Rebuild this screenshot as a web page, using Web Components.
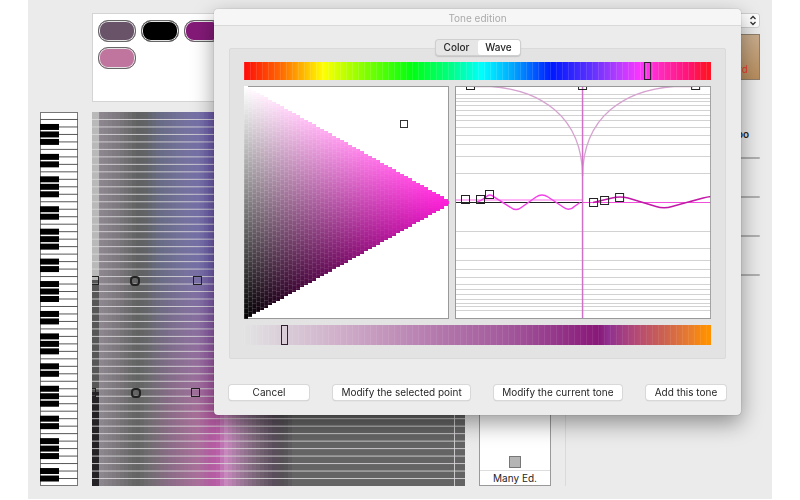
<!DOCTYPE html>
<html lang="en">
<head>
<meta charset="utf-8">
<title>Tone edition</title>
<style>
  body {
    margin: 0;
    background: #fff;
    color: #262626;
    font: 10px/14px Inter, "Liberation Sans", sans-serif;
  }
</style>
</head>
<body>
<score-window>
  <tone-palette slot="palette" colors="#685368,#000,#841a78,#5f5fa8,#a06aa0,#c88abf,#666,#333,#c0759e"></tone-palette>
  <side-top slot="top">rd</side-top>
  <piano-keys slot="piano"></piano-keys>
  <tone-roll slot="roll"></tone-roll>
  <edition-column slot="editions">Many Ed.</edition-column>
  <side-sliders slot="sliders">po</side-sliders>
  <tone-dialog slot="dialog" title-text="Tone edition">
    <view-tabs slot="tabs"></view-tabs>
    <color-slider kind="hue" value="87" label="Hue"></color-slider>
    <editor-panes>
      <color-triangle></color-triangle>
      <wave-chart></wave-chart>
    </editor-panes>
    <color-slider kind="tone" value="8" label="Point"></color-slider>
    <push-button slot="actions" wide>Cancel</push-button>
    <push-button slot="actions">Modify the selected point</push-button>
    <push-button slot="actions">Modify the current tone</push-button>
    <push-button slot="actions" wide>Add this tone</push-button>
  </tone-dialog>
</score-window>

<script>
class BaseElement extends HTMLElement {
  constructor() {
    super();
    this.attachShadow({ mode: 'open' });
  }

  connectedCallback() {
    this.shadowRoot.innerHTML = this.getTemplate();
    this.draw();
  }

  draw() {}
}

// linear interpolation in a list of [position, [r, g, b]]
function colorAt(stops, x) {
  let i = 1;
  while (i < stops.length - 1 && x > stops[i][0]) i++;
  const [x0, a] = stops[i - 1];
  const [x1, b] = stops[i];
  const t = Math.min(1, Math.max(0, (x - x0) / (x1 - x0)));
  return a.map((v, n) => v + (b[n] - v) * t);
}

function rgb(c) {
  return `rgb(${c.map(Math.round).join(',')})`;
}

class ScoreWindow extends BaseElement {
  getTemplate() {
    return `
      <style>
        :host {
          display: block;
          position: relative;
          margin: 0 28px;
          background: #ebebeb;
          overflow: hidden;
        }
        .grid {
          display: grid;
          grid-template-columns: 38px minmax(0, 1fr) 72px 195px;
          grid-template-rows: auto auto;
          column-gap: 14px;
          row-gap: 10px;
          padding: 13px 12px;
        }
        .palette { grid-column: 2; }
        .top { grid-column: 4; }
      </style>
      <main class="grid">
        <div class="palette"><slot name="palette"></slot></div>
        <div class="top"><slot name="top"></slot></div>
        <slot name="piano"></slot>
        <slot name="roll"></slot>
        <slot name="editions"></slot>
        <slot name="sliders"></slot>
      </main>
      <slot name="dialog"></slot>
    `;
  }
}

class TonePalette extends BaseElement {
  getTemplate() {
    const swatches = this.getAttribute('colors').split(',')
      .map((c) => `<button aria-label="Tone ${c}" style="--tone:${c}"></button>`)
      .join('');
    return `
      <style>
        :host {
          box-sizing: border-box;
          display: flex;
          flex-wrap: wrap;
          align-content: flex-start;
          gap: 5px;
          height: 89px;
          padding: 6px 5px;
          background: #fff;
          border: 1px solid #d4d4d4;
        }
        button {
          width: 38px;
          height: 22px;
          padding: 0;
          border: 1px solid #666;
          border-radius: 10px;
          background: var(--tone);
          box-shadow: inset 0 0 0 1px #e4e4e4;
        }
      </style>
      ${swatches}
    `;
  }
}

class SideTop extends BaseElement {
  getTemplate() {
    return `
      <style>
        :host { display: flex; flex-direction: column; gap: 6px; }
        .select { display: grid; align-items: center; }
        .select > * { grid-area: 1 / 1; }
        select {
          appearance: none;
          width: 100%;
          height: 15px;
          border: 1px solid #d0d0d0;
          border-radius: 3px;
          background: #fff;
        }
        svg { justify-self: end; margin-right: 3px; pointer-events: none; }
        .thumb {
          box-sizing: border-box;
          height: 46px;
          padding: 27px 11px 0 0;
          border: 1px solid #8f7f6c;
          background: linear-gradient(170deg, #cdbba6, #c7a987 50%, #b78c5c);
          color: #f0392b;
          text-align: right;
        }
      </style>
      <div class="select">
        <select aria-label="Instrument"></select>
        <svg width="8" height="11" fill="none" stroke="#333" stroke-width="1.3"><path d="M1.5 4 4 1.5 6.5 4M1.5 7 4 9.5 6.5 7"/></svg>
      </div>
      <div class="thumb"><slot></slot></div>
    `;
  }
}

class PianoKeys extends BaseElement {
  getTemplate() {
    let keys = '';
    for (let k = 1; k < 50; k++) {
      const y = k * 7.5;
      keys += `<path d="M0 ${y}H38" stroke="#555"/>`;
      if (k > 1 && [0, 2, 3, 4, 6].includes(k % 7)) {
        keys += `<rect x="0" y="${y - 3}" width="19" height="6"/>`;
      }
    }
    return `
      <style>
        :host { display: block; height: 374px; }
        svg { display: block; width: 100%; height: 100%; }
      </style>
      <svg viewBox="0 0 38 375" preserveAspectRatio="none">
        <rect x=".5" y=".5" width="37" height="374" fill="#fff" stroke="#777"/>${keys}
      </svg>
    `;
  }
}

class ToneRoll extends BaseElement {
  getTemplate() {
    return `
      <style>
        :host { display: block; }
        canvas { display: block; width: 100%; height: 374px; }
      </style>
      <canvas width="374" height="374"></canvas>
    `;
  }

  draw() {
    const canvas = this.shadowRoot.querySelector('canvas');
    canvas.width = this.clientWidth || 374;
    const width = canvas.width;
    const ctx = canvas.getContext('2d');
    const grey = [100, 100, 100];
    const upper = [
      [0, [148, 140, 150]], [26, [122, 118, 124]], [43, [96, 97, 97]], [52, [97, 99, 102]],
      [66, [104, 107, 132]], [85, [114, 112, 152]], [106, [120, 114, 170]],
      [118, [108, 92, 172]], [130, [130, 80, 160]], [190, grey], [375, grey],
    ];
    const lower = [
      [0, [148, 140, 150]], [26, [120, 116, 120]], [43, [98, 99, 98]], [54, [110, 108, 110]],
      [75, [138, 108, 134]], [103, [168, 112, 154]], [118, [178, 90, 160]], [124, [186, 96, 168]],
      [132, [200, 136, 190]], [146, [160, 120, 155]], [163, [120, 100, 118]],
      [180, [90, 78, 92]], [190, [84, 80, 84]], [200, grey], [375, grey],
    ];
    for (let x = 0; x < width; x += 4) {
      for (let r = 0; r < 50; r++) {
        // the blue part turns to pink between rows 20 and 40
        const t = Math.min(1, Math.max(0, (r - 20) / 20));
        ctx.fillStyle = rgb(colorAt([[0, colorAt(upper, x)], [1, colorAt(lower, x)]], t));
        ctx.fillRect(x, r * 7.5, 4, 8);
      }
    }
    ctx.fillStyle = '#b9b9b9';
    ctx.fillRect(0, 0, 7, 168);
    ctx.fillStyle = '#575757';
    ctx.fillRect(0, 168, 7, 112);
    ctx.fillStyle = '#242224';
    ctx.fillRect(0, 280, 7, 94);
    ctx.fillStyle = 'rgba(220,217,220,.85)';
    for (let r = 1; r < 50; r++) ctx.fillRect(0, r * 7.48 - 0.5, width, 1);
    ctx.fillRect(width - 11, 0, 1, 374);

    ctx.strokeStyle = '#222';
    [[2, 169], [105, 169], [-1, 281], [103, 281]].forEach(([x, y]) => {
      ctx.strokeRect(x - 3.5, y - 4.5, 8, 8);
    });
    ctx.lineWidth = 2;
    [[43, 169], [44, 281]].forEach(([x, y]) => {
      ctx.beginPath();
      ctx.roundRect(x - 4, y - 4, 8, 8, 3);
      ctx.stroke();
    });
  }
}

class EditionColumn extends BaseElement {
  getTemplate() {
    return `
      <style>
        :host {
          box-sizing: border-box;
          display: flex;
          flex-direction: column;
          justify-content: flex-end;
          align-items: center;
          gap: 2px;
          border: 1px solid #999;
          background: #fff;
          text-align: center;
        }
        .box { width: 10px; height: 10px; border: 1px solid #777; background: #b5b5b5; }
        .label { align-self: stretch; border-top: 1px solid #ddd; }
      </style>
      <div class="box"></div>
      <div class="label"><slot></slot></div>
    `;
  }
}

class SideSliders extends BaseElement {
  getTemplate() {
    return `
      <style>
        :host {
          display: flex;
          flex-direction: column;
          border-left: 1px solid #dadada;
          text-align: right;
          font-weight: 600;
        }
        .name { padding: 15px 11px 0 0; }
        input {
          appearance: none;
          width: 100%;
          height: 2px;
          margin: 16px 0 21px;
          border-radius: 1px;
          background: #b0b0b0;
        }
        input::-webkit-slider-thumb {
          appearance: none;
          width: 12px;
          height: 12px;
          border: 1px solid #bbb;
          border-radius: 6px;
          background: #fff;
        }
      </style>
      <div class="name"><slot></slot></div>
      <input type="range" value="30" aria-label="Tempo">
      <input type="range" value="30" aria-label="Volume">
      <input type="range" value="30" aria-label="Attack">
      <input type="range" value="30" aria-label="Release">
    `;
  }
}

class ToneDialog extends BaseElement {
  getTemplate() {
    return `
      <style>
        :host {
          position: absolute;
          top: 9px;
          left: 186px;
          right: 31px;
          border-radius: 4px;
          background: #ececec;
          box-shadow: 0 0 1px rgba(0, 0, 0, .5), 0 8px 22px rgba(0, 0, 0, .4);
        }
        header {
          height: 16px;
          line-height: 18px;
          border-radius: 4px 4px 0 0;
          border-bottom: 1px solid #d9d9d9;
          background: #f6f6f6;
          color: #aaa;
          text-align: center;
        }
        .group {
          display: flex;
          flex-direction: column;
          gap: 6px;
          margin: 22px 15px 26px;
          padding: 0 14px 13px;
          border: 1px solid #dadada;
          border-radius: 2px;
          background: #e3e3e3;
        }
        .tabs { align-self: center; margin: -9px 0 1px; }
        footer { display: flex; justify-content: space-between; padding: 0 15px 15px; }
      </style>
      <header>${this.getAttribute('title-text')}</header>
      <section class="group">
        <div class="tabs"><slot name="tabs"></slot></div>
        <slot></slot>
      </section>
      <footer><slot name="actions"></slot></footer>
    `;
  }
}

class ViewTabs extends BaseElement {
  getTemplate() {
    return `
      <style>
        :host {
          display: flex;
          border-radius: 3px;
          background: #e6e6e6;
          box-shadow: 0 0 0 1px #cfcfcf, 0 1px 1px 1px #c4c4c4;
          font-weight: 500;
        }
        input { appearance: none; position: absolute; margin: 0; }
        label { width: 42px; height: 15px; line-height: 15px; text-align: center; border-radius: 3px; }
        input:checked + label { background: #fff; }
      </style>
      <input type="radio" name="view" id="color"><label for="color">Color</label>
      <input type="radio" name="view" id="wave" checked><label for="wave">Wave</label>
    `;
  }
}

class ColorSlider extends BaseElement {
  getTemplate() {
    return `
      <style>
        :host {
          display: block;
          --height: 18px;
          --ramp: linear-gradient(90deg, #ff0a0a, #ff6a00 8%, #ff0 17%, #80ff00 26%, #0f1 36%, #00ff80 44%, #0ff 51%, #00a0ff 58%, #0018ff 66%, #5a30ff 74%, #b43cff 80%, #ff34ff 85%, #ff28b0 90%, #ff1478 95%, #ff1428 99%);
        }
        :host([kind="tone"]) {
          --height: 20px;
          --ramp: linear-gradient(90deg, #e3e3e3, #d9ccd8 9%, #d0b0ca 20%, #b377ac 42%, #a35a9c 56%, #963a8c 66%, #8b1e7b 74%, #881878 76%, #903090 78%, #b44a74 84%, #cc6250 90%, #e67a30 95%, #ff9000 99%);
        }
        input {
          appearance: none;
          display: block;
          width: 100%;
          height: var(--height);
          margin: 0;
          background: repeating-linear-gradient(90deg, rgba(255, 255, 255, .12) 0 1px, transparent 1px 6px), var(--ramp);
        }
        :host([kind="tone"]) input {
          background: repeating-linear-gradient(90deg, rgba(255, 255, 255, .08) 0 1px, transparent 1px 6px), var(--ramp);
        }
        input::-webkit-slider-thumb {
          appearance: none;
          box-sizing: border-box;
          width: 7px;
          height: var(--height);
          border: 1px solid #302030;
        }
      </style>
      <input type="range" value="${this.getAttribute('value')}" aria-label="${this.getAttribute('label')}">
    `;
  }
}

class EditorPanes extends BaseElement {
  getTemplate() {
    return `
      <style>
        :host { display: grid; grid-template-columns: 4fr 5fr; gap: 6px; }
      </style>
      <slot></slot>
    `;
  }
}

class ColorTriangle extends BaseElement {
  getTemplate() {
    return `
      <style>
        :host { display: block; }
        canvas { display: block; width: 100%; height: 233px; }
      </style>
      <canvas width="205" height="233"></canvas>
    `;
  }

  draw() {
    const ctx = this.shadowRoot.querySelector('canvas').getContext('2d');
    const tip = [255, 30, 218];
    ctx.fillStyle = '#fff';
    ctx.fillRect(0, 0, 205, 233);
    ctx.strokeStyle = '#999';
    ctx.strokeRect(-0.5, 0.5, 205, 232);
    for (let x = 0; x < 205; x += 4) {
      const t = Math.min(1, x / 206);
      const top = Math.round(t * 116);
      const bottom = 233 - top;
      for (let y = top; y < bottom; y += 2) {
        const white = (1 - t) * (1 - (y - top) / (bottom - top)) * 255;
        ctx.fillStyle = rgb(tip.map((v) => v * t + white));
        ctx.fillRect(x, y, 4, Math.min(2, bottom - y));
      }
      // thin light seams between the cells
      ctx.fillStyle = `rgba(255,255,255,${0.13 * (1 - t)})`;
      ctx.fillRect(x, top, 1, bottom - top);
      for (let y = top + 2 + (x % 8) / 4; y < bottom; y += 5) ctx.fillRect(x, y, 4, 1);
    }
    ctx.strokeStyle = '#333';
    ctx.strokeRect(156.5, 34.5, 7, 7);
  }
}

class WaveChart extends BaseElement {
  getTemplate() {
    const lines = [8.5, 12.5, 15.5, 19.5, 24.5, 29.5, 34.5, 41.5, 49.5, 58.5, 70.5, 87.5]
      .map((y) => `<path d="M0 ${y}H256M0 ${233 - y}H256"/>`)
      .join('');
    const points = [
      [15, 0], [127, 0], [240, 0],
      [10, 114], [25, 114], [34, 109], [138, 117], [149, 115], [164, 112],
    ].map(([x, y]) => `<rect x="${x - 3.5}" y="${y - 4.5}" width="8" height="8"/>`).join('');
    return `
      <style>
        :host { display: block; }
        svg { display: block; width: 100%; height: 233px; background: #fff; }
      </style>
      <svg viewBox="0 0 256 233" preserveAspectRatio="none" fill="none">
        <g stroke="#d2d2d2">${lines}</g>
        <g stroke="#d6a3d0" stroke-width="1.3">
          <path d="M18 .5H36C85 4 127 30 127.5 90"/>
          <path d="M238 .5H219C170 4 128 30 127.5 90"/>
        </g>
        <path d="M0 114H127" stroke="#ffb4f6" stroke-width="2"/>
        <path d="M0 116.5H127" stroke="#222"/>
        <path d="M127 116.5H256" stroke="#f050dc"/>
        <path d="M127.5 0V233" stroke="#d070c6" stroke-width="1.5"/>
        <path d="M22 116Q26 115 31 111 35 107 39 111L55 121Q61 126 67 121L81 111Q87 107 93 111L108 121Q114 126 120 120L125 116.5" stroke="#f340e6" stroke-width="1.5"/>
        <path d="M138 116.5 157 112Q165 110 173 112L201 120.5Q209 123 217 120.5L248 112Q252 111 256 110.5" stroke="#c218a8" stroke-width="1.5"/>
        <g stroke="#222">${points}</g>
        <rect x=".5" y=".5" width="255" height="232" stroke="#999"/>
      </svg>
    `;
  }
}

class PushButton extends BaseElement {
  getTemplate() {
    return `
      <style>
        :host { display: block; }
        button {
          display: block;
          box-sizing: border-box;
          height: 15px;
          padding: 0 8px;
          border: 0;
          border-radius: 3px;
          background: #fff;
          box-shadow: 0 0 0 1px #d8d8d8, 0 1px 1px #aaa;
          color: inherit;
          font: inherit;
          line-height: 15px;
        }
        :host([wide]) button { padding: 0 4px; min-width: 80px; }
      </style>
      <button type="button"><slot></slot></button>
    `;
  }
}

customElements.define('score-window', ScoreWindow);
customElements.define('tone-palette', TonePalette);
customElements.define('side-top', SideTop);
customElements.define('piano-keys', PianoKeys);
customElements.define('tone-roll', ToneRoll);
customElements.define('edition-column', EditionColumn);
customElements.define('side-sliders', SideSliders);
customElements.define('tone-dialog', ToneDialog);
customElements.define('view-tabs', ViewTabs);
customElements.define('color-slider', ColorSlider);
customElements.define('editor-panes', EditorPanes);
customElements.define('color-triangle', ColorTriangle);
customElements.define('wave-chart', WaveChart);
customElements.define('push-button', PushButton);
</script>
</body>
</html>
